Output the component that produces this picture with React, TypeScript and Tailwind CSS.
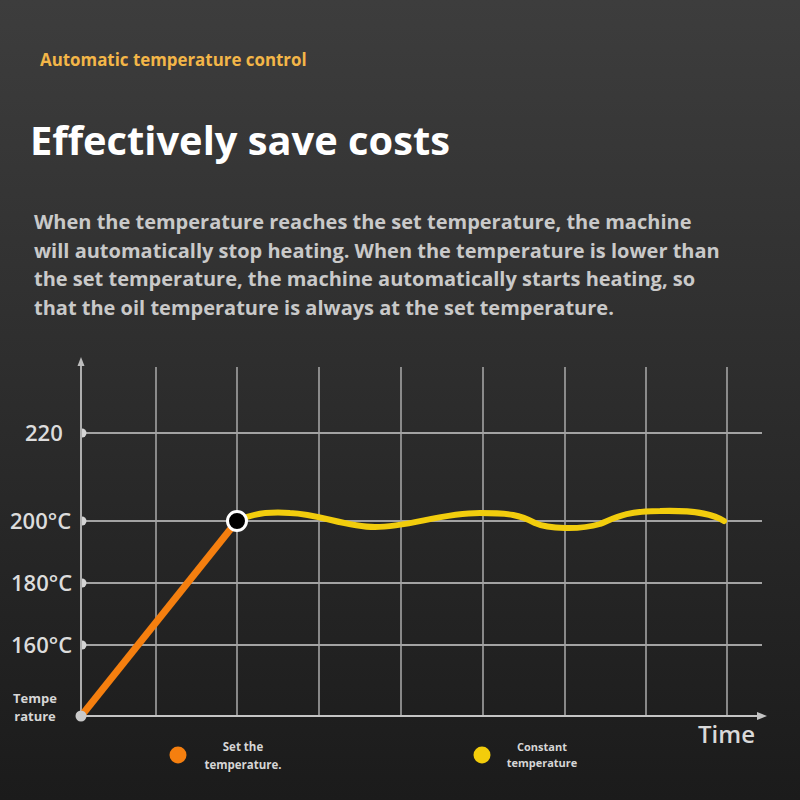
import React from "react";

const F = "'Open Sans', 'Noto Sans', sans-serif";

function Chart() {
  const vx = [156, 237, 319, 401, 483, 565, 646, 727];
  const hy = [433, 521, 583, 645];
  const grid = "#a3a3a3";
  return (
    <svg
      width={800}
      height={450}
      viewBox="0 350 800 450"
      className="block"
      style={{ fontFamily: F }}
    >
      {vx.map((x) => (
        <line key={x} x1={x} y1={367} x2={x} y2={716} stroke={grid} strokeWidth={1.6} />
      ))}
      {hy.map((y) => (
        <line key={y} x1={84} y1={y} x2={762} y2={y} stroke={grid} strokeWidth={1.8} />
      ))}
      {/* axes */}
      <line x1={81} y1={716} x2={81} y2={364} stroke="#bdbdbd" strokeWidth={1.8} />
      <polygon points="81,357 77.5,366 84.5,366" fill="#bdbdbd" />
      <line x1={81} y1={716} x2={760} y2={716} stroke="#c4c4c4" strokeWidth={2} />
      <polygon points="767,716 757,712 757,720" fill="#c4c4c4" />
      {hy.map((y) => (
        <path key={"m" + y} d={`M82 ${y - 4.5} A4.5 4.5 0 0 1 82 ${y + 4.5} Z`} fill="#d4d4d4" />
      ))}
      {/* orange ramp */}
      <line x1={82} y1={715} x2={237} y2={521} stroke="#f57f0f" strokeWidth={7} />
      <circle cx={81} cy={716} r={5.5} fill="#c9c9c9" />
      {/* yellow wave */}
      <path
        d="M240 520 C255 512 275 512 290 513 C320 514 345 527 375 527 C410 527 440 513 480 513 C510 513 520 515 535 523 C548 529 580 530 600 524 C615 518 625 511 660 511 C700 510 715 515 724 521"
        fill="none"
        stroke="#f2cd0d"
        strokeWidth={6}
        strokeLinecap="round"
      />
      <circle cx={237} cy={521} r={9.5} fill="#000" stroke="#fff" strokeWidth={3} />
      {/* y labels */}
      <g fill="#dcdcdc" fontWeight={600} fontSize={22}>
        <text x={25} y={441}>220</text>
        <text x={10} y={529}>200°C</text>
        <text x={11} y={591}>180°C</text>
        <text x={11} y={653}>160°C</text>
      </g>
      <g fill="#d6d6d6" fontWeight={700} fontSize={13} textAnchor="middle">
        <text x={35} y={703}>Tempe</text>
        <text x={35} y={721}>rature</text>
      </g>
      <text x={698} y={743} fill="#d9d9d9" fontWeight={600} fontSize={24}>
        Time
      </text>
      {/* legend */}
      <circle cx={178} cy={755} r={8.5} fill="#f57f0f" />
      <g fill="#d6d6d6" fontWeight={700} fontSize={11.5} textAnchor="middle">
        <text x={243} y={751}>Set the</text>
        <text x={243} y={769}>temperature.</text>
      </g>
      <circle cx={482} cy={755} r={8.5} fill="#f3cd0b" />
      <g fill="#d6d6d6" fontWeight={700} fontSize={11} textAnchor="middle">
        <text x={542} y={751}>Constant</text>
        <text x={542} y={767}>temperature</text>
      </g>
    </svg>
  );
}

export default function App() {
  return (
    <div
      className="w-[800px] h-[800px] overflow-hidden bg-[linear-gradient(180deg,#3d3d3d_0%,#2e2e2e_45%,#1b1b1b_100%)]"
      style={{ fontFamily: F }}
    >
      <div className="h-[350px] flex flex-col">
        <div className="pl-[40px] pt-[48px] text-[16.9px] font-bold text-[#f3b648] leading-[24px]">
          Automatic temperature control
        </div>
        <div className="pl-[30px] mt-[40px] text-[39.8px] font-bold text-white leading-[56px]">
          Effectively save costs
        </div>
        <div className="pl-[34px] pr-[75px] mt-[40px] text-[20px] font-bold text-[#c9c9c9] leading-[28.5px]">
          When the temperature reaches the set temperature, the machine will automatically stop heating. When the temperature is lower than the set temperature, the machine automatically starts heating, so that the oil temperature is always at the set temperature.
        </div>
      </div>
      <Chart />
    </div>
  );
}
